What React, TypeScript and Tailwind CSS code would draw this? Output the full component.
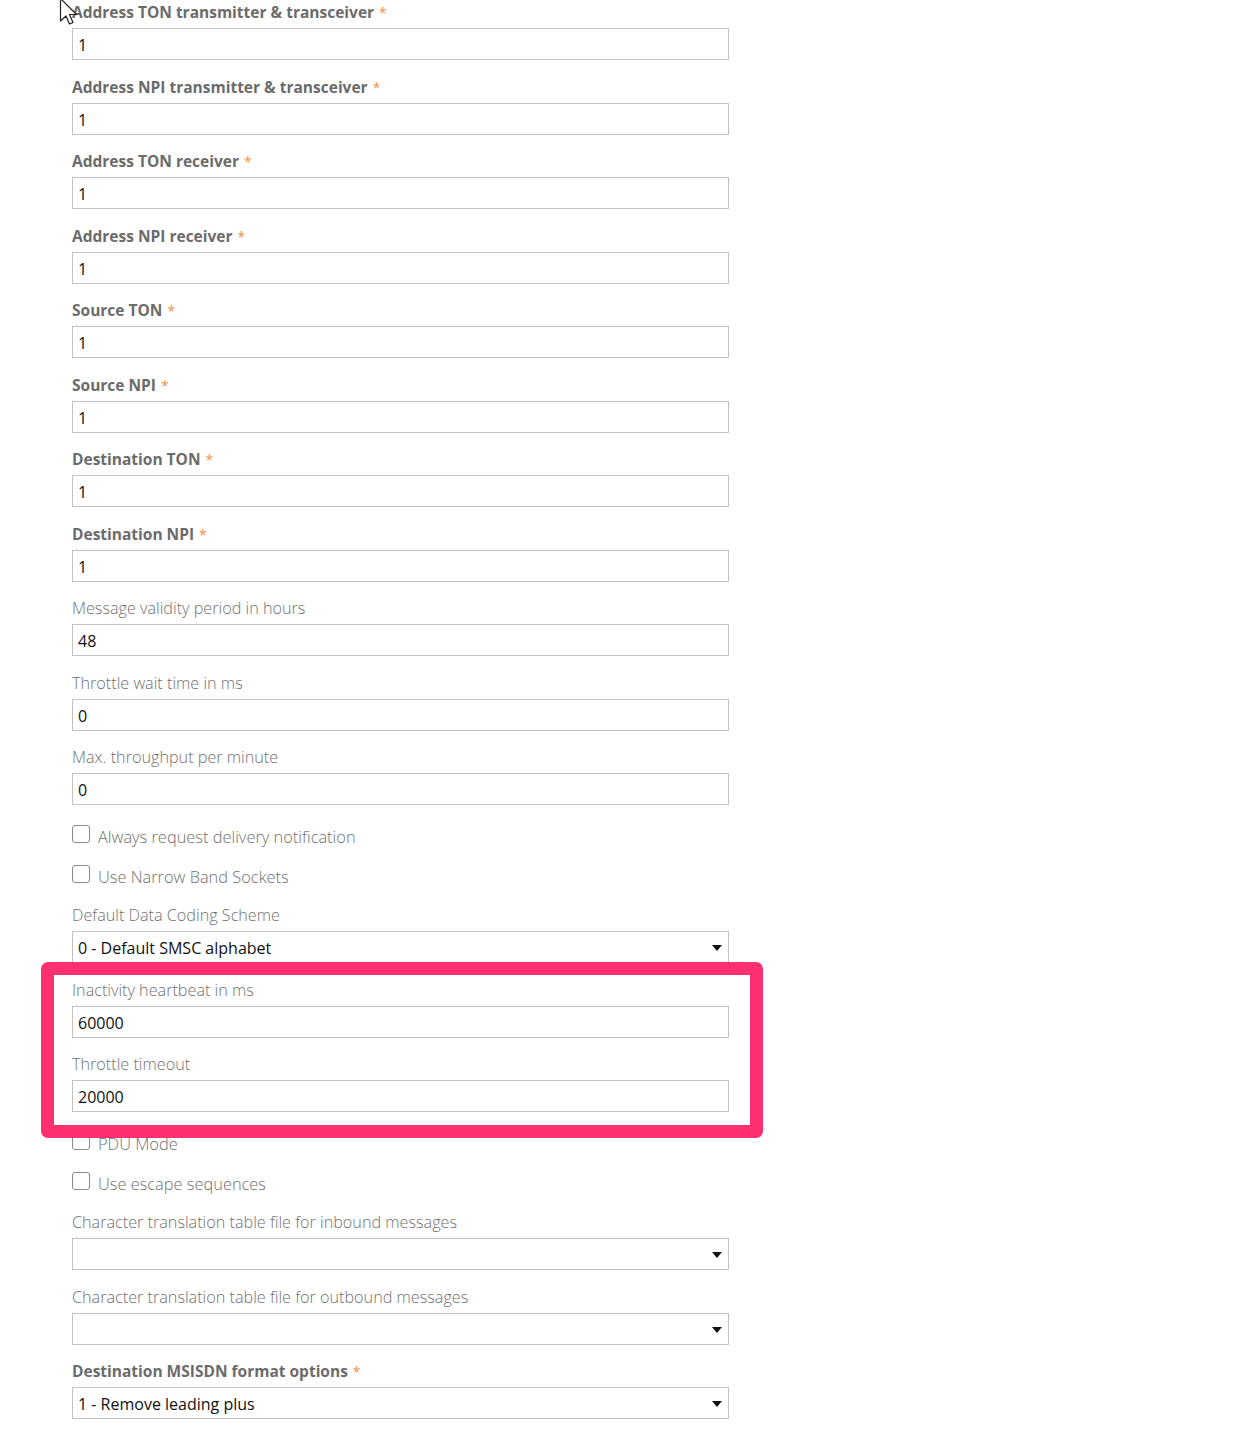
import type { ReactNode } from 'react';

type Field = {
  label: string;
  value: string;
  required?: boolean;
  select?: boolean;
};

const topFields: Field[] = [
  { label: 'Address TON transmitter & transceiver', value: '1', required: true },
  { label: 'Address NPI transmitter & transceiver', value: '1', required: true },
  { label: 'Address TON receiver', value: '1', required: true },
  { label: 'Address NPI receiver', value: '1', required: true },
  { label: 'Source TON', value: '1', required: true },
  { label: 'Source NPI', value: '1', required: true },
  { label: 'Destination TON', value: '1', required: true },
  { label: 'Destination NPI', value: '1', required: true },
  { label: 'Message validity period in hours', value: '48' },
  { label: 'Throttle wait time in ms', value: '0' },
  { label: 'Max. throughput per minute', value: '0' },
];

const midFields: Field[] = [
  { label: 'Default Data Coding Scheme', value: '0 - Default SMSC alphabet', select: true },
  { label: 'Inactivity heartbeat in ms', value: '60000' },
  { label: 'Throttle timeout', value: '20000' },
];

const bottomFields: Field[] = [
  { label: 'Character translation table file for inbound messages', value: '', select: true },
  { label: 'Character translation table file for outbound messages', value: '', select: true },
  { label: 'Destination MSISDN format options', value: '1 - Remove leading plus', required: true, select: true },
];

function FormField({ field }: { field: Field }) {
  return (
    <div className="mb-[15.5px]">
      <div
        className={
          field.required
            ? 'h-[22px] leading-[22px] mb-[5px] text-[15.5px] font-bold text-[#6b6b6b]'
            : 'h-[22px] leading-[22px] mb-[5px] text-[16.2px] font-light text-[#707070]'
        }
      >
        {field.label}
        {field.required && <span className="ml-[5px] text-[14px] font-normal text-[#f2914a]">*</span>}
      </div>
      <div className="relative h-[32px] border border-[#c2c2c2] bg-white pl-[5px] pr-[30px] text-[16px] leading-[32px] text-[#111]">
        {field.value}
        {field.select && (
          <span className="absolute right-[6px] top-[13px] h-0 w-0 border-x-[5px] border-t-[6px] border-x-transparent border-t-[#111]" />
        )}
      </div>
    </div>
  );
}

function CheckRow({ children }: { children: ReactNode }) {
  return (
    <div className="flex h-[40px] items-start pt-[4px]">
      <span className="mt-[0.5px] h-[18px] w-[18px] shrink-0 rounded-[3px] border border-[#8a8a8a] bg-white" />
      <span className="ml-[8px] mt-[1px] text-[16.4px] leading-[22px] font-light text-[#707070]">{children}</span>
    </div>
  );
}

export default function App() {
  return (
    <div
      className="relative h-[1436px] w-[1240px] overflow-hidden bg-white"
      style={{ fontFamily: '"Open Sans", "Noto Sans", sans-serif' }}
    >
      <div className="w-[657px] ml-[72px] pt-[1px]">
        {topFields.map((f) => (
          <FormField key={f.label} field={f} />
        ))}

        <div className="mb-[3.5px]">
          <CheckRow>Always request delivery notification</CheckRow>
          <CheckRow>Use Narrow Band Sockets</CheckRow>
        </div>

        {midFields.map((f) => (
          <FormField key={f.label} field={f} />
        ))}

        <div className="mb-[3.5px]">
          <CheckRow>PDU Mode</CheckRow>
          <CheckRow>Use escape sequences</CheckRow>
        </div>

        {bottomFields.map((f) => (
          <FormField key={f.label} field={f} />
        ))}
      </div>

      {/* highlight frame drawn over the form */}
      <div className="absolute left-[41px] top-[962px] h-[176px] w-[722px] rounded-[7px] border-[13px] border-[#ff306f]" />

      {/* mouse pointer */}
      <svg className="absolute left-[59px] top-[-3px]" width="22" height="30" viewBox="0 0 22 30">
        <path d="M1.5 1.5 L1.5 24 L7 19 L10.5 27 L14 25.5 L10.5 17.5 L17.5 17.5 Z" fill="#fff" stroke="#222" strokeWidth="1.2" strokeLinejoin="round" />
      </svg>
    </div>
  );
}
